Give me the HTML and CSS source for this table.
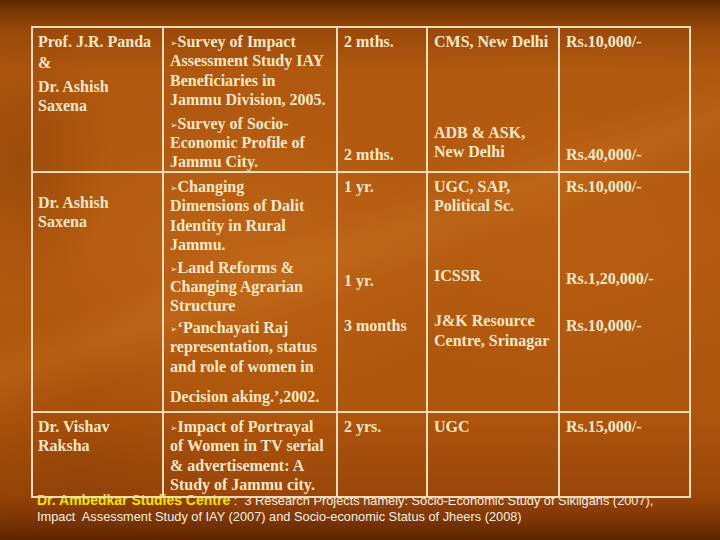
FILE: index.html
```html
<!DOCTYPE html>
<html lang="en">
<head>
<meta charset="utf-8">
<title>Research Projects</title>
<link rel="stylesheet" href="styles.css">
</head>
<body>
<div class="slide">
  <div class="grid">
    <div class="cell c1">
      <p>Prof. J.R. Panda</p>
      <p class="m2">&amp;</p>
      <p class="m5">Dr. Ashish<br>Saxena</p>
    </div>
    <div class="cell">
      <p><span class="bl">➢</span>Survey of Impact<br>Assessment Study IAY<br>Beneficiaries in<br>Jammu Division, 2005.</p>
      <p class="m5"><span class="bl">➢</span>Survey of Socio-<br>Economic Profile of<br>Jammu City.</p>
    </div>
    <div class="cell">
      <p>2 mths.</p>
      <p class="r1big">2 mths.</p>
    </div>
    <div class="cell">
      <p>CMS, New Delhi</p>
      <p class="r1adb">ADB &amp; ASK,<br>New Delhi</p>
    </div>
    <div class="cell">
      <p>Rs.10,000/-</p>
      <p class="r1big">Rs.40,000/-</p>
    </div>

    <div class="cell c1">
      <p class="m16">Dr. Ashish<br>Saxena</p>
    </div>
    <div class="cell">
      <p><span class="bl">➢</span>Changing<br>Dimensions of Dalit<br>Identity in Rural<br>Jammu.</p>
      <p class="m4"><span class="bl">➢</span>Land Reforms &amp;<br>Changing Agrarian<br>Structure</p>
      <p class="m3"><span class="bl">➢</span>‘Panchayati Raj<br>representation, status<br>and role of women in</p>
      <p class="m12">Decision aking.’,2002.</p>
    </div>
    <div class="cell">
      <p>1 yr.</p>
      <p class="r2a">1 yr.</p>
      <p class="r2b">3 months</p>
    </div>
    <div class="cell">
      <p>UGC, SAP,<br>Political Sc.</p>
      <p class="r2c">ICSSR</p>
      <p class="r2d">J&amp;K Resource<br>Centre, Srinagar</p>
    </div>
    <div class="cell">
      <p>Rs.10,000/-</p>
      <p class="r2e">Rs.1,20,000/-</p>
      <p class="r2f">Rs.10,000/-</p>
    </div>

    <div class="cell c1">
      <p>Dr. Vishav<br>Raksha</p>
    </div>
    <div class="cell">
      <p><span class="bl">➢</span>Impact of Portrayal<br>of Women in TV serial<br>&amp; advertisement: A<br>Study of Jammu city.</p>
    </div>
    <div class="cell">
      <p>2 yrs.</p>
    </div>
    <div class="cell">
      <p>UGC</p>
    </div>
    <div class="cell">
      <p>Rs.15,000/-</p>
    </div>
  </div>
  <p class="footer"><span class="hl">Dr. Ambedkar Studies Centre</span> :&nbsp; 3 Research Projects namely: Socio-Economic Study of Sikligans (2007),<br>Impact&nbsp; Assessment Study of IAY (2007) and Socio-economic Status of Jheers (2008)</p>
</div>
</body>
</html>
```

FILE: styles.css
```css
html, body {
  margin: 0;
  padding: 0;
}
p {
  margin: 0;
}
body {
  width: 720px;
  height: 540px;
  overflow: hidden;
  background:
    linear-gradient(160deg, rgba(0, 0, 0, 0) 0%, rgba(0, 0, 0, 0) 42%, rgba(222, 140, 50, 0.16) 47%, rgba(0, 0, 0, 0) 53%, rgba(0, 0, 0, 0) 100%),
    radial-gradient(ellipse 220px 160px at 250px 260px, rgba(214, 124, 40, 0.28), rgba(214, 124, 40, 0) 100%),
    radial-gradient(ellipse 200px 200px at 560px 220px, rgba(200, 110, 30, 0.22), rgba(200, 110, 30, 0) 100%),
    radial-gradient(ellipse 90px 140px at 20px 160px, rgba(110, 45, 0, 0.3), rgba(110, 45, 0, 0) 100%),
    radial-gradient(ellipse 160px 120px at 80px 470px, rgba(120, 50, 0, 0.25), rgba(120, 50, 0, 0) 100%),
    linear-gradient(to bottom, #5c2800 0px, #7a3804 12px, #9c4a0a 32px, #b0580f 70px, #b35a10 250px, #ad540d 420px, #9a460a 495px, #7c3504 520px, #5a2400 540px);
}
.slide {
  padding: 26px 0 0 31px;
}
.grid {
  position: relative;
  z-index: 1;
  display: grid;
  width: 658px;
  grid-template-columns: 131px 174px 90px 132px 131px;
  grid-template-rows: 145px 240px 85px;
  border-top: 2px solid #efdcb6;
  border-left: 2px solid #efdcb6;
  font-family: "Liberation Serif", "Times New Roman", serif;
  font-weight: bold;
  font-size: 16px;
  line-height: 19.3px;
  color: #f6e7c6;
}
.cell {
  border-right: 2px solid #efdcb6;
  border-bottom: 2px solid #efdcb6;
  padding: 4px 0 0 6px;
  white-space: nowrap;
  overflow: visible;
  min-width: 0;
}
.cell.c1 {
  padding-left: 5px;
}
.bl {
  font-family: "DejaVu Sans", sans-serif;
  font-size: 9px;
  line-height: 9px;
  font-weight: normal;
  vertical-align: 1px;
}
.m2 { margin-top: 1.5px; }
.m3 { margin-top: 2.5px; }
.m4 { margin-top: 3.5px; }
.m5 { margin-top: 4.5px; }
.m12 { margin-top: 11.5px; }
.m16 { margin-top: 16px; }
.r1big { margin-top: 93.5px; }
.r1adb { margin-top: 71.5px; }
.r2a { margin-top: 74.5px; }
.r2b { margin-top: 25.5px; }
.r2c { margin-top: 50px; }
.r2d { margin-top: 26.5px; }
.r2e { margin-top: 72.5px; }
.r2f { margin-top: 27.5px; }
.footer {
  margin: -6px 0 0 6px;
  font-family: "Liberation Sans", Arial, sans-serif;
  font-size: 12.8px;
  line-height: 16px;
  color: #f4efe6;
  white-space: nowrap;
}
.hl {
  color: #f2e20a;
  font-weight: bold;
  font-size: 14px;
}
```
